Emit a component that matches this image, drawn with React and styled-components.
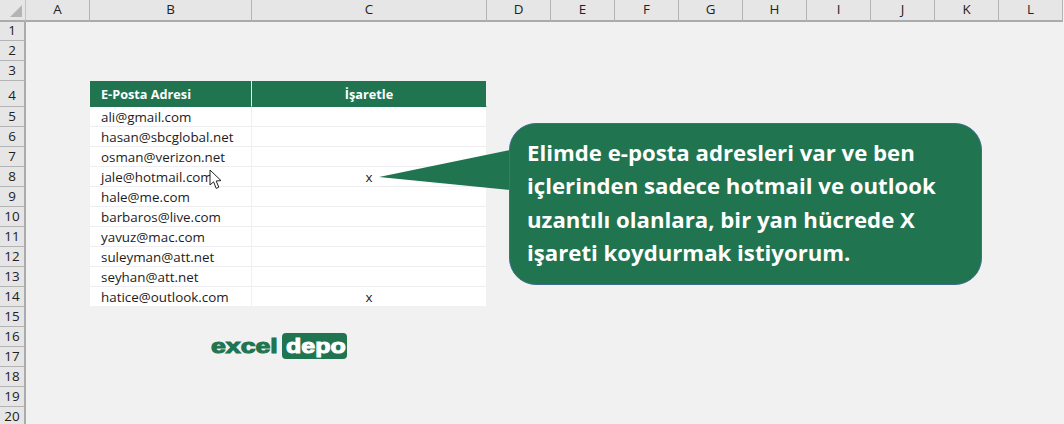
import React from 'react'
import styled, { createGlobalStyle } from 'styled-components'

const GREEN = '#20744f'

const columns = ['A', 'B', 'C', 'D', 'E', 'F', 'G', 'H', 'I', 'J', 'K', 'L']
const rowNumbers = Array.from({ length: 20 }, (_, i) => i + 1)

const emails = {
    5: ['ali@gmail.com', ''],
    6: ['hasan@sbcglobal.net', ''],
    7: ['osman@verizon.net', ''],
    8: ['jale@hotmail.com', 'x'],
    9: ['hale@me.com', ''],
    10: ['barbaros@live.com', ''],
    11: ['yavuz@mac.com', ''],
    12: ['suleyman@att.net', ''],
    13: ['seyhan@att.net', ''],
    14: ['hatice@outlook.com', 'x'],
}

const GlobalStyle = createGlobalStyle`
    html, body {
        margin: 0;
        padding: 0;
        background: #f1f1f1;
    }
    body {
        font-family: "Open Sans", "Liberation Sans", sans-serif;
    }
`

const Page = styled.div`
    position: relative;
    width: 1064px;
    height: 424px;
    overflow: hidden;
    background: #f1f1f1;
`

const Sheet = styled.div`
    display: grid;
    grid-template-columns: 26px 64px 162px 235px repeat(9, 64px);
    grid-template-rows: 22px 19px repeat(2, 20px) 26px repeat(16, 20px);
`

const Corner = styled.div`
    background: #e6e6e6;
    border-bottom: 2px solid #ababab;
    border-right: 1px solid #c4c4c4;
    position: relative;

    &::after {
        content: '';
        position: absolute;
        right: 3px;
        bottom: 3px;
        border-style: solid;
        border-width: 0 0 12px 12px;
        border-color: transparent transparent #b4b4b4 transparent;
    }
`

const ColHead = styled.div`
    display: flex;
    align-items: center;
    justify-content: center;
    background: #e6e6e6;
    border-bottom: 2px solid #ababab;
    border-right: 1px solid #b4b4b4;
    color: #222;
    font-size: 13.4px;
    line-height: 1;
`

const RowHead = styled.div`
    display: flex;
    align-items: center;
    justify-content: center;
    padding-top: ${(p) => (p.$tall ? '4px' : '0')};
    background: #e6e6e6;
    border-bottom: 1px solid #b4b4b4;
    border-right: 2px solid #ababab;
    color: #222;
    font-size: 13.4px;
    line-height: 1;
`

const Blank = styled.div``

const HeaderCell = styled.div`
    display: flex;
    align-items: center;
    justify-content: ${(p) => (p.$center ? 'center' : 'flex-start')};
    padding-left: ${(p) => (p.$center ? '0' : '11px')};
    background: ${GREEN};
    border-right: 1px solid ${(p) => (p.$center ? '#f1f1f1' : '#e8f0ec')};
    border-bottom: 1px solid ${GREEN};
    color: #fff;
    font-size: 12.7px;
    font-weight: 700;
`

const Cell = styled.div`
    display: flex;
    align-items: center;
    justify-content: ${(p) => (p.$center ? 'center' : 'flex-start')};
    padding-left: ${(p) => (p.$center ? '0' : '11px')};
    background: #fff;
    border-right: 1px solid ${(p) => (p.$center ? '#f1f1f1' : '#f0f0f4')};
    border-bottom: 1px solid ${(p) => (p.$last ? '#f1f1f1' : '#eeeef2')};
    color: #1c1c1c;
    font-size: 13.4px;
    white-space: nowrap;
`

const Callout = styled.div`
    position: absolute;
    left: 509px;
    top: 123px;
    width: 473px;
    height: 162px;
    box-sizing: border-box;
    padding: 12px 0 0 17px;
    background: ${GREEN};
    border: 1px solid #3f6f8f;
    border-radius: 27px;
    color: #fff;
    font-size: 22.2px;
    font-weight: 700;
    line-height: 33.4px;
    white-space: nowrap;
`

const CalloutTail = styled.svg`
    position: absolute;
    left: 378px;
    top: 149px;
    width: 133px;
    height: 42px;
`

const CursorIcon = styled.svg`
    position: absolute;
    left: 209px;
    top: 169px;
    width: 13px;
    height: 21px;
`

const Logo = styled.div`
    position: absolute;
    left: 211px;
    top: 333px;
    display: flex;
    align-items: center;
    gap: 3px;
    height: 26px;
    font-family: "Liberation Sans", sans-serif;
    font-weight: 700;
`

const LogoExcel = styled.span`
    display: block;
    width: 68px;
    color: ${GREEN};
    font-size: 21px;
    line-height: 26px;
    transform: scale(1.27, 1);
    transform-origin: left center;
    -webkit-text-stroke: 1.1px ${GREEN};
`

const LogoDepo = styled.span`
    display: block;
    width: 65px;
    height: 26px;
    box-sizing: border-box;
    padding-left: 4px;
    background: ${GREEN};
    border-radius: 4px;
    color: #fff;
    font-size: 21px;
    line-height: 25px;
    white-space: nowrap;
    -webkit-text-stroke: 1px #fff;
`

const LogoDepoText = styled.span`
    display: inline-block;
    transform: scale(1.19, 1);
    transform-origin: left center;
`

const renderRow = (n) => {
    const row = [<RowHead key={`h${n}`} $tall={n === 4}>{n}</RowHead>]
    columns.forEach((col) => {
        const key = `${col}${n}`
        if (n === 4 && col === 'B') {
            row.push(<HeaderCell key={key}>E-Posta Adresi</HeaderCell>)
        } else if (n === 4 && col === 'C') {
            row.push(<HeaderCell key={key} $center>İşaretle</HeaderCell>)
        } else if (emails[n] && col === 'B') {
            row.push(<Cell key={key} $last={n === 14}>{emails[n][0]}</Cell>)
        } else if (emails[n] && col === 'C') {
            row.push(<Cell key={key} $center $last={n === 14}>{emails[n][1]}</Cell>)
        } else {
            row.push(<Blank key={key} />)
        }
    })
    return row
}

const App = () => {
    return (
        <Page>
            <GlobalStyle />
            <Sheet>
                <Corner />
                {columns.map((col) => (
                    <ColHead key={col}>{col}</ColHead>
                ))}
                {rowNumbers.map(renderRow)}
            </Sheet>
            <CalloutTail viewBox="0 0 133 42">
                <path d="M1 28 L132 1 L132 41 Z" fill={GREEN} />
            </CalloutTail>
            <Callout>
                Elimde e-posta adresleri var ve ben
                <br />
                içlerinden sadece hotmail ve outlook
                <br />
                uzantılı olanlara, bir yan hücrede X
                <br />
                işareti koydurmak istiyorum.
            </Callout>
            <CursorIcon viewBox="0 0 13 21">
                <path
                    d="M1 1 L1 16 L4.6 12.8 L7.2 19.4 L9.8 18.2 L7.2 12 L12 11.6 Z"
                    fill="#fff"
                    stroke="#222"
                    strokeWidth="1"
                    strokeLinejoin="round"
                />
            </CursorIcon>
            <Logo>
                <LogoExcel>excel</LogoExcel>
                <LogoDepo>
                    <LogoDepoText>depo</LogoDepoText>
                </LogoDepo>
            </Logo>
        </Page>
    )
}

export default App
